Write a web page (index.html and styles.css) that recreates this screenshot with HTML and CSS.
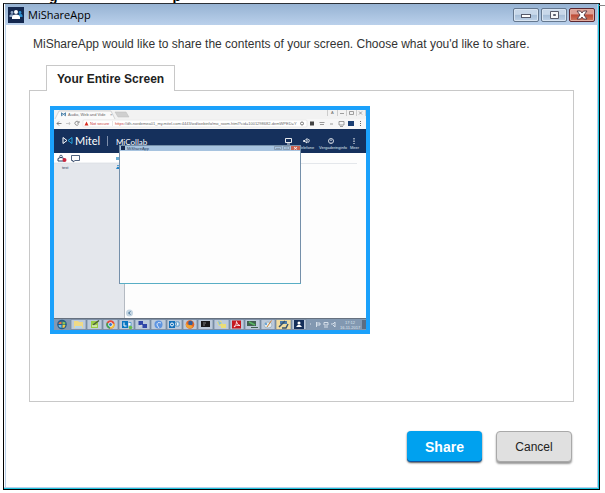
FILE: index.html
```html
<!DOCTYPE html>
<html lang="en">
<head>
    <meta charset="UTF-8">
    <meta name="viewport" content="width=device-width, initial-scale=1.0">
    <title>MiShareApp</title>
    <link rel="stylesheet" href="styles.css">
</head>
<body>
    <div class="clipped-line" aria-hidden="true"><span>g</span><span>p</span></div>

    <div class="window">
        <header class="titlebar">
            <svg class="app-icon" viewBox="0 0 16 16" aria-hidden="true">
                <rect width="16" height="16" fill="#14284f"/>
                <circle cx="4" cy="5.5" r="1.4" fill="#8fa6c4"/>
                <path d="M1.5 10V8.5Q2 7.3 4 7.3L6 8V10Z" fill="#8fa6c4"/>
                <circle cx="12" cy="5.5" r="1.4" fill="#2b8fd0"/>
                <path d="M10 10V8Q14 6 14.5 8.5V10Z" fill="#2b8fd0"/>
                <circle cx="8" cy="5" r="2" fill="#fff"/>
                <path d="M4 12V10Q4.500 7.500 8 7.500T12 10V12Z" fill="#fff"/>
            </svg>
            <h1>MiShareApp</h1>
            <div class="window-buttons">
                <button type="button" class="window-button" aria-label="Minimize">
                    <svg viewBox="0 0 12 10"><rect x="1.500" y="4.500" width="9" height="3" fill="#fff" stroke="#555a6b"/></svg>
                </button>
                <button type="button" class="window-button" aria-label="Maximize">
                    <svg viewBox="0 0 12 10"><path d="M2.500 1.500H10.500V8.500H2.500ZM5.500 4.500V5.500H7.500V4.500Z" fill="#f5f7fa" fill-rule="evenodd" stroke="#555a6b"/></svg>
                </button>
                <button type="button" class="window-button close" aria-label="Close">
                    <svg viewBox="0 0 12 10"><path d="M1 1H4.500L6 3L7.500 1H11L8 5L11 9H7.500L6 7L4.500 9H1L4 5Z" fill="#fff" stroke="#5f4048"/></svg>
                </button>
            </div>
        </header>

        <main class="content">
            <p class="message">MiShareApp would like to share the contents of your screen. Choose what you'd like to share.</p>

            <div class="tabs" role="tablist">
                <button type="button" class="tab" role="tab" id="screenTab" aria-selected="true" aria-controls="screenPanel">Your Entire Screen</button>
            </div>
            <div class="panel" role="tabpanel" id="screenPanel" aria-labelledby="screenTab">
                <button type="button" class="thumbnail" aria-label="Entire screen">
                    <svg viewBox="54 110 312 220">
                        <rect x="54" y="110" width="312" height="220" fill="#fdfdfd"/>

                        <!-- browser tabs and address bar -->
                        <rect x="54" y="110" width="312" height="9" fill="#f2f2f2"/>
                        <path d="M55 119L59 111H111L115 119" fill="#fafafa" stroke="#c4c4c4" stroke-width=".7"/>
                        <path d="M115 112H126L129 117H118Z" fill="#cfcfcf" stroke="#bbb" stroke-width=".5"/>
                        <path d="M61.500 112.800V115.800L63.500 114.300ZM65.500 112.800V115.800L63.500 114.300Z" fill="none" stroke="#2c6b9a" stroke-width=".8"/>
                        <text class="tiny" x="68" y="116">Audio, Web and Vide</text>
                        <text class="tiny" x="110" y="116">×</text>
                        <path d="M327.500 110V116M337.500 110V116M346.500 110V116M356.500 110V116M365.500 110V116" stroke="#ccc"/>
                        <text class="tiny" x="331" y="114">A</text>
                        <path d="M340 113.500H344M349.500 111.500H353.500V114.500H349.500ZM359 111.500L362 114.500M362 111.500L359 114.500" fill="none" stroke="#888" stroke-width=".8"/>
                        <rect x="54" y="119" width="312" height="10" fill="#f7f7f7"/>
                        <rect x="83" y="120" width="224" height="7" rx="1" fill="#fff" stroke="#d5d5d5" stroke-width=".5"/>
                        <path d="M61.500 123.500H57M59 121.500L57 123.500L59 125.500" fill="none" stroke="#666" stroke-width=".8"/>
                        <path d="M66 123.500H70M69 122L70 123.500L69 125" fill="none" stroke="#bbb" stroke-width=".8"/>
                        <path d="M78.500 122A2 2 0 1 0 78.500 124.500M79 121V123H77" fill="none" stroke="#777" stroke-width=".8"/>
                        <path d="M84.500 125.500L86.500 121.500L88.500 125.500Z" fill="#d93025"/>
                        <text class="tiny" x="90" y="125"><tspan class="warning">Not secure</tspan></text>
                        <path d="M112.500 121V126" stroke="#ccc" stroke-width=".5"/>
                        <text class="tiny" x="115" y="125"><tspan class="warning">https</tspan>://dh-nordemea01_my.mitel.com:4443/wd/webinfo/mo_room.html?cid=1001298682-demWPED=Y</text>
                        <circle cx="302" cy="123.500" r="1.500" fill="none" stroke="#777"/>
                        <rect x="310" y="121.500" width="4" height="4" fill="#444"/>
                        <path d="M319.500 122.500H324.500M320 124.500H324M330 124H333" stroke="#999"/>
                        <path d="M339 121.500H344V125H339ZM340 126.500H343" fill="none" stroke="#777" stroke-width=".7"/>
                        <rect x="348" y="121" width="6" height="5" fill="#1b3f73"/>
                        <path d="M360.500 121V126" stroke="#666" stroke-dasharray="1"/>

                        <!-- page header -->
                        <rect x="54" y="129" width="312" height="24" fill="#15305c"/>
                        <path d="M63 137.500V143.500L67 140.500Z" fill="none" stroke="#fff"/>
                        <path d="M72 137.500V143.500L68 140.500Z" fill="none" stroke="#25a4e0"/>
                        <text class="brand" x="75" y="145">Mitel</text>
                        <path d="M107.500 136V146" stroke="#9aa8bf" stroke-width=".8"/>
                        <text class="product" x="116" y="145">MiCollab</text>
                        <path d="M285.500 138.500H291.500V142.500H285.500ZM287 144H290" fill="none" stroke="#fff" stroke-width=".9"/>
                        <path d="M303.500 140.500H305L307 138.500V143L305 141.500H303.500ZM308.500 139Q310 140.500 308.500 142.500" fill="none" stroke="#fff" stroke-width=".9"/>
                        <circle cx="331" cy="141" r="2.500" fill="none" stroke="#fff" stroke-width=".8"/>
                        <path d="M331 139.500V142.500M354 138V144" stroke="#fff" stroke-dasharray="1.500 1"/>
                        <text class="tiny light" x="299" y="149">Telefone</text>
                        <text class="tiny light" x="319" y="149">Vergaderinginfo</text>
                        <text class="tiny light" x="350" y="149">Meer</text>

                        <!-- sidebar -->
                        <rect x="54" y="153" width="70" height="10" fill="#fff"/>
                        <rect x="54" y="163" width="70" height="156" fill="#e4e7ec"/>
                        <path d="M54 163H124M301 163.500H357" stroke="#d9dde3" stroke-width=".7"/>
                        <path d="M124.500 284V319" stroke="#b4bac2"/>
                        <path d="M58 161V158.500Q61 156 64 158.500V161Z" fill="none" stroke="#263c60"/>
                        <circle cx="61" cy="156.500" r="1.300" fill="none" stroke="#263c60" stroke-width=".8"/>
                        <circle cx="64.500" cy="160" r="2" fill="#c9253d"/>
                        <path d="M71.500 155.500H79.500V160.500H75L73 162V160.500H71.500Z" fill="none" stroke="#263c60" stroke-width=".8"/>
                        <text class="tiny dark" x="62" y="169">test</text>
                        <rect x="116" y="157" width="4" height="3" fill="#69add3"/>
                        <path d="M116 169Q118 164 120 169ZM117 166A1 1 0 0 1 119 166" fill="#2584c6"/>

                        <!-- nested window -->
                        <rect x="119.500" y="145.500" width="181" height="138" fill="#fdfdfd" stroke="#7590aa"/>
                        <rect x="120" y="146" width="180" height="5" fill="#a7c3df"/>
                        <rect x="121" y="146" width="4" height="4" fill="#14284f"/>
                        <text class="tiny dark" x="127" y="150">MiShareApp</text>
                        <path d="M274.500 146.500H281.500V149.500H274.500ZM283.500 146.500H289.500V149.500H283.500ZM276 148.500H280M285.500 148H288" fill="none" stroke="#7e8c9d" stroke-width=".7"/>
                        <rect x="291" y="146" width="9" height="4" fill="#c9614f"/>
                        <path d="M294 147L297 149.500M297 147L294 149.500" stroke="#fff" stroke-width=".8"/>
                        <path d="M120 283.500H301" stroke="#58aec5"/>
                        <circle cx="129.500" cy="313" r="3.500" fill="#c4d5e2"/>
                        <path d="M130.500 311.500L128.500 313L130.500 314.500" fill="none" stroke="#3d6d92"/>

                        <!-- taskbar -->
                        <rect x="54" y="318" width="312" height="12" fill="#8298b1"/>
                        <path d="M54 318.500H366" stroke="#66717f"/>
                        <g fill="#bccadb" stroke="#71849b" stroke-width=".7">
                            <path d="M71 319.500H86V329.500H71ZM87 319.500H102V329.500H87ZM103 319.500H118V329.500H103ZM119 319.500H134V329.500H119ZM135 319.500H150V329.500H135ZM151 319.500H166V329.500H151ZM167 319.500H182V329.500H167ZM183 319.500H197V329.500H183ZM198 319.500H213V329.500H198ZM214 319.500H229V329.500H214ZM230 319.500H244V329.500H230ZM245 319.500H260V329.500H245ZM261 319.500H275V329.500H261ZM292 319.500H306V329.500H292Z"/>
                            <path d="M276 319.500H291V329.500H276Z" fill="#f1dca0"/>
                        </g>
                        <circle cx="62" cy="324.500" r="4.800" fill="#245c88"/>
                        <path d="M59 322.500L61.500 321.500V324H58.500Z" fill="#ef7846"/>
                        <path d="M62.500 321.500L65.500 322.500L65 324.500H62.500Z" fill="#8ac555"/>
                        <path d="M58.500 325H61.500V328L59 327Z" fill="#6cc4ef"/>
                        <path d="M62.500 325H65.500L64.500 327.500L62.500 328Z" fill="#f1c94b"/>
                        <path d="M74 321H78L79 322H83V328H74Z" fill="#efd987"/>
                        <path d="M75 326H82V328H75Z" fill="#b6d6e8"/>
                        <rect x="91" y="321" width="7" height="7" fill="#9acb45"/>
                        <path d="M93 325L99 320.500" stroke="#4d603a" stroke-width="1.500"/>
                        <path d="M92 326H97" stroke="#fff"/>
                        <circle cx="110.500" cy="324.500" r="4.200" fill="#e64b3b"/>
                        <path d="M110.500 324.500L106.800 322.500A4.200 4.200 0 0 0 110 328.700Z" fill="#3ba65a"/>
                        <path d="M110.500 324.500L114.600 323.500A4.200 4.200 0 0 1 110 328.700Z" fill="#f4c63d"/>
                        <circle cx="110.500" cy="324.500" r="2" fill="#3e79d0" stroke="#fff" stroke-width=".8"/>
                        <rect x="122" y="321" width="6" height="7" fill="#0877c2"/>
                        <path d="M124 322.500V326H126.500" fill="none" stroke="#fff"/>
                        <path d="M128.500 322.500H131V326H128.500" fill="#fff" stroke="#2b83c2" stroke-width=".7"/>
                        <circle cx="130.500" cy="327.500" r="1.800" fill="#64bd4f"/>
                        <path d="M138.500 321H143V325H138.500ZM142.500 324H147V328H142.500Z" fill="#3046a8"/>
                        <path d="M139 327L142 325" stroke="#ddd"/>
                        <circle cx="158.500" cy="324.500" r="4" fill="#5d94e1"/>
                        <path d="M161 323Q157 321.500 157 325L159 328" fill="none" stroke="#dae9fc"/>
                        <rect x="169" y="321" width="6" height="7" fill="#1571b9"/>
                        <circle cx="172" cy="324.500" r="1.500" fill="none" stroke="#fff"/>
                        <path d="M175.500 322H179V326H175.500L177 324Z" fill="#fff" stroke="#2a7fbd" stroke-width=".7"/>
                        <circle cx="190" cy="324.500" r="4.300" fill="#e66524"/>
                        <circle cx="190.500" cy="323" r="2.300" fill="#315f9e"/>
                        <path d="M186 322Q187 326 191 325L193 327Q188 330 186 326Z" fill="#efa332"/>
                        <rect x="201" y="321" width="9" height="6" fill="#18191c"/>
                        <path d="M203 323H206M203 325H205" stroke="#aaa" stroke-width=".7"/>
                        <path d="M217 322L221 320.500L223 325L219 326ZM221 324H226V328H221Z" fill="#eadd76"/>
                        <path d="M218 320.500L222 323L219 325Z" fill="#85bce1"/>
                        <rect x="232" y="320.500" width="9" height="8" fill="#c61920"/>
                        <path d="M234 327Q237 324 236.500 321.500Q237 325 240 325.500Q236 324.500 234 327" fill="none" stroke="#fff" stroke-width=".8"/>
                        <path d="M247 321H256V326H247ZM251 327H258V328H251Z" fill="#416152"/>
                        <path d="M249 322L255 325" stroke="#58b864" stroke-width="1.500"/>
                        <ellipse cx="268" cy="325" rx="4" ry="3" fill="#e4edf0" stroke="#809aac" stroke-width=".6"/>
                        <path d="M267 327L271.500 320.500" stroke="#d48333"/>
                        <circle cx="266" cy="324" r="1" fill="#4591d4"/>
                        <path d="M280 321H287V324H280Z" fill="#4d7caa"/>
                        <path d="M279 327L285 321M282 328H286L288 324" fill="none" stroke="#39536c" stroke-width="1.500"/>
                        <rect x="294" y="320" width="10" height="9" fill="#142e59"/>
                        <circle cx="299" cy="323" r="1.500" fill="#fff"/>
                        <path d="M296 327Q299 322.500 302 327Z" fill="#fff"/>
                        <path d="M310 324H311M316.500 322V327M317 323H320V325H317M324 322.500H328V325H324ZM324 327H328M331 324H333L335 322V327L333 325" fill="none" stroke="#dfe6ef" stroke-width=".9"/>
                        <text class="tiny light" x="345" y="324">17:12</text>
                        <text class="tiny light" x="340" y="329">16-11-2017</text>
                        <rect x="362" y="320" width="4" height="9" fill="#5c6d82"/>
                    </svg>
                </button>
            </div>

            <div class="actions">
                <button type="button" class="action share">Share</button>
                <button type="button" class="action cancel">Cancel</button>
            </div>
        </main>
    </div>
</body>
</html>
```
FILE: styles.css
```css
* {
    box-sizing: border-box;
}

body {
    margin: 0;
    background-color: #fff;
    color: #333;
    font-family: "Liberation Sans", Arial, sans-serif;
    font-size: 12px;
}

button {
    margin: 0;
    padding: 0;
    font-family: inherit;
    cursor: pointer;
}

/* only the descenders of this line show above the window */
.clipped-line {
    display: flex;
    align-items: flex-end;
    gap: 115px;
    height: 3px;
    padding-left: 49px;
    overflow: hidden;
    color: #000;
    font-size: 14px;
    font-weight: bold;
    line-height: 14px;
}

.window {
    position: relative;
    margin: 0 5px 3px 3px;
    border: 1px solid #000;
    border-top-color: #2b3036;
    box-shadow: inset -1px -1px #20c5e0, inset -2px -2px #b9d0ea, inset 1px 0 #fff, inset 2px 0 #b9d0ea;
    padding: 0 2px 2px 1px;
}

/* rule that runs on to the right of the window */
.window::after {
    content: "";
    position: absolute;
    top: 1px;
    left: 100%;
    width: 6px;
    height: 1px;
    background-color: #888;
}

.titlebar {
    display: flex;
    align-items: center;
    height: 21px;
    padding: 0 2px 0 3px;
    background: linear-gradient(#96b3d3, #bad0eb);
    color: #000;
}

.app-icon {
    width: 16px;
    height: 16px;
}

h1 {
    flex: 1;
    margin: 0 0 0 4px;
    font-family: "Open Sans", "Segoe UI", sans-serif;
    font-size: 11px;
    font-weight: normal;
}

.window-buttons {
    display: flex;
    gap: 2px;
}

.window-button {
    display: flex;
    align-items: center;
    justify-content: center;
    width: 26px;
    height: 14px;
    border: 1px solid #65788f;
    border-radius: 2px;
    background: linear-gradient(#c8d8ea 45%, #a5bdd7 50%, #bfd2e8);
    box-shadow: inset 0 0 0 1px #d9e5f2;
}

.window-button svg {
    width: 12px;
    height: 10px;
}

.window-button.close {
    border-color: #5b2730;
    background: linear-gradient(#dda095 40%, #bd4b36 50%, #cf7a60);
    box-shadow: inset 0 0 0 1px #e2ada0;
}

.content {
    padding: 12px 23px 25px 24px;
}

.message {
    margin: 0 0 14px 4px;
    line-height: 14px;
}

.tabs {
    display: flex;
    padding-left: 17px;
}

.tab {
    position: relative;
    height: 26px;
    margin-bottom: -1px;
    padding: 0 10px;
    border: 1px solid #c8c8c8;
    border-bottom: 0;
    background-color: #fff;
    color: #222;
    font-size: 12px;
    font-weight: bold;
}

.panel {
    min-height: 312px;
    padding: 15px 20px;
    border: 1px solid #c8c8c8;
}

.thumbnail {
    display: block;
    width: 100%;
    max-width: 320px;
    border: 4px solid #1ba1fb;
    background-color: #fff;
}

.thumbnail svg {
    display: block;
    width: 100%;
}

.tiny {
    fill: #666;
    font-size: 4px;
}

.tiny.light {
    fill: #dfe6ef;
}

.tiny.dark {
    fill: #263c60;
}

.warning {
    fill: #c93a35;
}

.brand {
    fill: #fff;
    font-family: Lato, sans-serif;
    font-size: 11px;
}

.product {
    fill: #fff;
    font-family: Lato, sans-serif;
    font-size: 8px;
}

.actions {
    display: flex;
    justify-content: flex-end;
    gap: 14px;
    margin-top: 29px;
    padding-right: 2px;
}

.action {
    height: 31px;
    border-radius: 4px;
}

.share {
    width: 75px;
    border: 0;
    background-color: #00a1ef;
    box-shadow: inset 0 -1px #15539b, 0 1px 2px #555;
    color: #fff;
    font-size: 14px;
    font-weight: bold;
}

.cancel {
    width: 76px;
    border: 1px solid #a9a9a9;
    background-color: #e0e0e0;
    box-shadow: 0 2px 2px #999;
    color: #222;
    font-size: 12px;
}
```
